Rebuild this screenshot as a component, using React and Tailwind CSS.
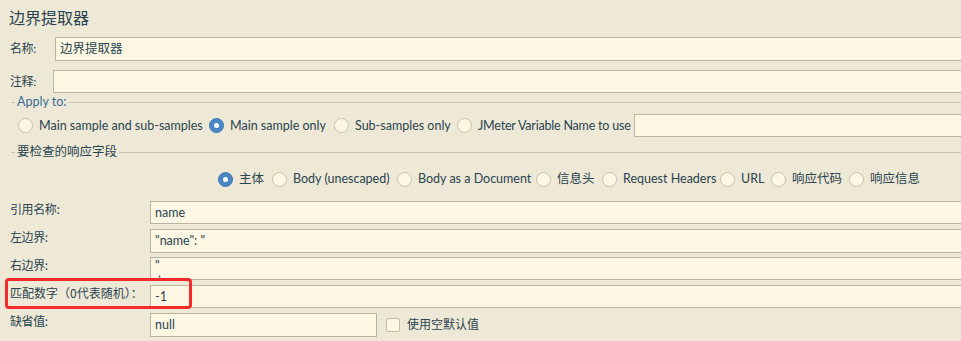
import React from "react";

const font = { fontFamily: '"Lato", "Noto Sans CJK SC", sans-serif' };
const cjk = { fontFamily: '"Noto Sans CJK SC", "Lato", sans-serif' };

function Radio({ checked }) {
  return checked ? (
    <span className="flex h-[15px] w-[15px] shrink-0 items-center justify-center rounded-full border border-[#3f78b5] bg-[#4a86c5]">
      <span className="h-[5px] w-[5px] rounded-full bg-white" />
    </span>
  ) : (
    <span className="h-[15px] w-[15px] shrink-0 rounded-full border border-[#c9c1ae] bg-[#fdf6e3]" />
  );
}

function RadioItem({ label, checked, w, tc = "" }) {
  return (
    <div className={`flex shrink-0 items-center gap-[6px] ${w}`}>
      <Radio checked={checked} />
      <span className={`whitespace-nowrap text-[12.5px] leading-[16px] ${tc}`}>{label}</span>
    </div>
  );
}

function Input({ children, className = "" }) {
  return (
    <div
      className={`flex items-center overflow-hidden whitespace-nowrap border border-[#bbb4a3] bg-[#fdf6e3] pl-[4px] text-[12.5px] leading-[16px] text-[#2b4652] ${className}`}
    >
      {children}
    </div>
  );
}

function Legend({ text, color }) {
  return (
    <div className="flex h-[14px] items-center pl-[11px]">
      <span className="h-px w-[4px] bg-[#cbc3b1]" />
      <span className={`whitespace-nowrap px-[2px] text-[12.5px] leading-[14px] ${color}`}>{text}</span>
      <span className="h-px flex-1 bg-[#cbc3b1]" />
    </div>
  );
}

function FieldRow({ label, children, mt, h, tr = "tracking-[-0.4px]" }) {
  return (
    <div className={`flex items-start ${mt}`}>
      <div
        className={`w-[150px] shrink-0 whitespace-nowrap pl-[10px] text-[12px] leading-[16px] ${tr}`}
        style={cjk}
      >
        {label}
      </div>
      <div className={`flex flex-1 ${h}`}>{children}</div>
    </div>
  );
}

export default function App() {
  return (
    <div
      className="relative h-[341px] w-[961px] overflow-hidden bg-[#eee8d6] text-[#2a4450]"
      style={font}
    >
      <div className="w-[1000px]">
        {/* Title */}
        <div className="h-[37px] pl-[9px] pt-[8px] text-[16px] leading-[20px]">边界提取器</div>

        {/* Name */}
        <div className="flex h-[24px] items-center">
          <div className="w-[55px] shrink-0 pl-[10px] text-[12px] tracking-[-0.4px]">名称:</div>
          <Input className="h-full flex-1">边界提取器</Input>
        </div>

        {/* Comment */}
        <div className="mt-[9px] flex h-[23px] items-center">
          <div className="w-[53px] shrink-0 pl-[10px] text-[12px] tracking-[-0.4px]">注释:</div>
          <Input className="h-full flex-1" />
        </div>

        <div className="mt-[2px]">
          <Legend text="Apply to:" color="text-[#3a6b92]" />
        </div>

        {/* Apply to row */}
        <div className="mt-[5px] flex h-[23px] items-center pl-[18px]">
          <RadioItem w="w-[191px]" label="Main sample and sub-samples" />
          <RadioItem w="w-[125px]" label="Main sample only" checked />
          <RadioItem w="w-[123px]" label="Sub-samples only" />
          <RadioItem w="w-[177px]" label="JMeter Variable Name to use" tc="tracking-[-0.2px]" />
          <Input className="h-full flex-1" />
        </div>

        <div className="mt-[8px]">
          <Legend text="要检查的响应字段" color="text-[#2a4450]" />
        </div>

        {/* Field to check */}
        <div className="mt-[10px] flex h-[20px] items-center pl-[218px]">
          <RadioItem w="w-[54px]" label="主体" checked />
          <RadioItem w="w-[125px]" label="Body (unescaped)" />
          <RadioItem w="w-[139px]" label="Body as a Document" />
          <RadioItem w="w-[66px]" label="信息头" />
          <RadioItem w="w-[118px]" label="Request Headers" />
          <RadioItem w="w-[51px]" label="URL" />
          <RadioItem w="w-[78px]" label="响应代码" />
          <RadioItem w="w-[80px]" label="响应信息" />
        </div>

        <FieldRow label="引用名称:" mt="mt-[12px]" h="h-[23px]">
          <Input className="flex-1">name</Input>
        </FieldRow>
        <FieldRow label="左边界:" mt="mt-[5px]" h="h-[24px]">
          <Input className="flex-1">"name": "</Input>
        </FieldRow>
        <FieldRow label="右边界:" mt="mt-[4px]" h="h-[23px]">
          <div className="relative flex-1 overflow-hidden border border-[#bbb4a3] bg-[#fdf6e3] text-[12.5px] text-[#2a4450]">
            <span className="absolute left-[4px] top-[1px] leading-[14px]">"</span>
            <span className="absolute left-[7px] top-[8px] leading-[14px]">,</span>
          </div>
        </FieldRow>
        <FieldRow label="匹配数字（0代表随机）：" mt="mt-[5px]" h="h-[23px]" tr="tracking-[0px]">
          <Input className="flex-1">-1</Input>
        </FieldRow>
        <FieldRow label="缺省值:" mt="mt-[5px]" h="h-[24px]">
          <Input className="w-[227px] shrink-0">null</Input>
          <div className="ml-[9px] flex items-center gap-[7px]">
            <span className="h-[14px] w-[14px] rounded-[2px] border border-[#c2bba9] bg-[#fdf6e3]" />
            <span className="text-[12px] leading-[16px]">使用空默认值</span>
          </div>
        </FieldRow>
      </div>

      {/* highlight overlay */}
      <div className="pointer-events-none absolute left-[5px] top-[278px] h-[31px] w-[187px] rounded-[4px] border-[3px] border-[#f52a2a]" />
    </div>
  );
}
